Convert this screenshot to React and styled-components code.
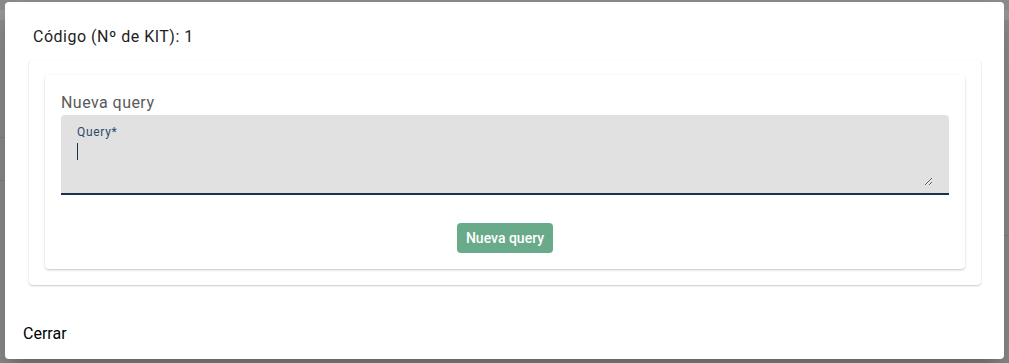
import React from 'react';
import styled, { createGlobalStyle } from 'styled-components';

const GlobalStyle = createGlobalStyle`
  html, body {
    margin: 0;
    padding: 0;
    background: #8b8b8b;
    font-family: Roboto, "Liberation Sans", Arial, sans-serif;
  }
`;

const Backdrop = styled.div`
  height: 363px;
  box-sizing: border-box;
  padding: 2px 5px 4px 5px;
  background:
    linear-gradient(#7f7f7f, #7f7f7f) 0 137px / 5px 1px no-repeat,
    linear-gradient(#7f7f7f, #7f7f7f) 0 180px / 5px 1px no-repeat,
    linear-gradient(#7f7f7f, #7f7f7f) 1004px 235px / 5px 1px no-repeat,
    linear-gradient(#959595, #959595) 0 10px / 100% 10px no-repeat,
    #8b8b8b;
`;

const Dialog = styled.div`
  height: 100%;
  box-sizing: border-box;
  background: #fff;
  border-radius: 4px;
  box-shadow: 0 11px 15px -7px rgba(0, 0, 0, 0.2), 0 24px 38px 3px rgba(0, 0, 0, 0.14);
  display: flex;
  flex-direction: column;
  padding: 23px 0 0 0;
`;

const Title = styled.h2`
  margin: 0 0 11px 0;
  padding: 0 28px;
  font-size: 16px;
  font-weight: 400;
  line-height: 24px;
  letter-spacing: 0.5px;
  color: #1d1d1d;
`;

const Content = styled.div`
  padding: 0 23px 0 24px;
`;

const Card = styled.div`
  background: #fff;
  border-radius: 4px;
  padding: ${(p) => p.$pad};
  box-shadow: 0 1px 3px 0 rgba(0, 0, 0, 0.16), 0 1px 1px 0 rgba(0, 0, 0, 0.08);
  ${(p) => p.$outer && 'box-shadow: 0 1px 2px 0 rgba(0,0,0,0.2), 0 0 1px 0 rgba(0,0,0,0.08);'}
`;

const SectionTitle = styled.div`
  font-size: 16px;
  line-height: 24px;
  color: #5a5a5a;
  letter-spacing: 0.45px;
`;

const Field = styled.div`
  position: relative;
  height: 80px;
  box-sizing: border-box;
  background: #e1e1e1;
  border-radius: 4px 4px 0 0;
  border-bottom: 2px solid #16324f;
  padding: 10px 16px 0 16px;
`;

const Label = styled.label`
  display: block;
  font-size: 12px;
  line-height: 14px;
  letter-spacing: 0.7px;
  color: #2c4a6a;
`;

const TextArea = styled.textarea`
  display: block;
  width: 100%;
  height: 44px;
  margin-top: 3px;
  box-sizing: border-box;
  border: none;
  outline: none;
  background: transparent;
  resize: vertical;
  padding: 0;
  font: inherit;
  font-size: 16px;
  line-height: 19px;
  color: #1d1d1d;
  caret-color: #16324f;
`;

const Caret = styled.span`
  position: absolute;
  left: 16px;
  top: 28px;
  width: 1px;
  height: 17px;
  background: #16324f;
`;

const Actions = styled.div`
  display: flex;
  justify-content: center;
  padding-top: 28px;
`;

const PrimaryButton = styled.button`
  height: 30px;
  width: 96px;
  border: none;
  border-radius: 4px;
  background: #69aa8a;
  color: #fff;
  font-family: inherit;
  font-size: 14px;
  font-weight: 500;
  padding: 0;
`;

const Footer = styled.div`
  margin-top: auto;
  padding: 0 0 13px 18px;
`;

const TextButton = styled.button`
  border: none;
  background: none;
  padding: 0;
  font-family: inherit;
  font-size: 16px;
  line-height: 24px;
  color: #000;
`;

export default function App() {
  return (
    <>
      <GlobalStyle />
      <Backdrop>
        <Dialog>
          <Title>Código (Nº de KIT): 1</Title>
          <Content>
            <Card $outer $pad="15px 16px 16px 16px">
              <Card $pad="16px 16px 16px 16px">
                <SectionTitle>Nueva query</SectionTitle>
                <Field>
                  <Label>Query*</Label>
                  <TextArea aria-label="Query" />
                  <Caret />
                </Field>
                <Actions>
                  <PrimaryButton>Nueva query</PrimaryButton>
                </Actions>
              </Card>
            </Card>
          </Content>
          <Footer>
            <TextButton>Cerrar</TextButton>
          </Footer>
        </Dialog>
      </Backdrop>
    </>
  );
}
